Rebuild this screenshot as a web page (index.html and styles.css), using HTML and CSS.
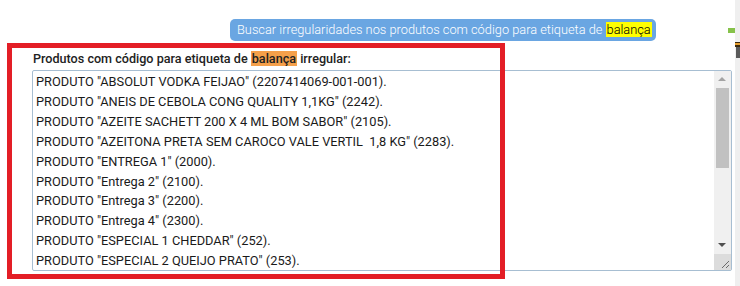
FILE: index.html
```html
<!DOCTYPE html>
<html lang="pt-BR">
<head>
    <meta charset="UTF-8">
    <title>Etiquetas de balança</title>
    <link rel="stylesheet" href="styles.css">
</head>
<body>

    <div class="page">
        <div class="main">
            <div class="toolbar">
                <span class="search-pill">Buscar irregularidades nos produtos com código para etiqueta de <mark class="hl-yellow">balança</mark></span>
            </div>

            <div class="result">
                <div class="result-label">Produtos com código para etiqueta de <mark class="hl-orange">balança</mark> irregular:</div>
                <div class="result-box">
                    <div class="result-lines">
                        <div>PRODUTO "ABSOLUT VODKA FEIJAO" (2207414069-001-001).</div>
                        <div>PRODUTO "ANEIS DE CEBOLA CONG QUALITY 1,1KG" (2242).</div>
                        <div>PRODUTO "AZEITE SACHETT 200 X 4 ML BOM SABOR" (2105).</div>
                        <div>PRODUTO "AZEITONA PRETA SEM CAROCO VALE VERTIL &nbsp;1,8 KG" (2283).</div>
                        <div>PRODUTO "ENTREGA 1" (2000).</div>
                        <div>PRODUTO "Entrega 2" (2100).</div>
                        <div>PRODUTO "Entrega 3" (2200).</div>
                        <div>PRODUTO "Entrega 4" (2300).</div>
                        <div>PRODUTO "ESPECIAL 1 CHEDDAR" (252).</div>
                        <div>PRODUTO "ESPECIAL 2 QUEIJO PRATO" (253).</div>
                    </div>
                    <div class="scrollbar">
                        <div class="arrow arrow-up"></div>
                        <div class="track">
                            <div class="thumb"></div>
                        </div>
                        <div class="arrow arrow-down"></div>
                        <div class="grip">
                            <svg width="17" height="16" viewBox="0 0 17 16">
                                <path d="M8 14 L15 7 M12 14 L15 11" stroke="#6b6b6b" stroke-width="1" fill="none"/>
                            </svg>
                        </div>
                    </div>
                </div>
            </div>

            <div class="callout"></div>
        </div>

        <div class="side">
            <div class="side-green"></div>
            <div class="side-stripes"></div>
            <div class="side-block"></div>
        </div>
    </div>

</body>
</html>
```

FILE: styles.css
```css
/* General */
body {
    margin: 0;
    padding: 0;
    background: #fff;
    font-family: Roboto, "Liberation Sans", sans-serif;
    color: #222;
}

mark {
    color: #000;
    padding: 0 1px;
}

.hl-yellow {
    background-color: #ffff00;
}

.hl-orange {
    background-color: #f5a04a;
    color: #222;
}

.page {
    display: flex;
    width: 740px;
    height: 286px;
    overflow: hidden;
}

.main {
    position: relative;
    width: 735px;
}

/* Top search button */
.toolbar {
    padding: 19px 0 0 230px;
    height: 22px;
}

.search-pill {
    display: inline-block;
    height: 22px;
    line-height: 22px;
    padding: 0 4px 0 7px;
    background-color: #6aa6e2;
    border-radius: 5px;
    color: #fff;
    font-size: 12.8px;
    font-weight: 300;
}

/* Result section */
.result {
    margin: 10px 0 0 32px;
}

.result-label {
    font-size: 12.6px;
    font-weight: 500;
    line-height: 15px;
    height: 19px;
    padding-left: 1px;
}

.result-box {
    display: flex;
    width: 698px;
    height: 199px;
    border: 1px solid #a7bed2;
    border-radius: 2px;
}

.result-lines {
    flex: 1;
    overflow: hidden;
    padding: 1px 0 0 3px;
    font-size: 12.8px;
    line-height: 19.9px;
    color: #1a1a1a;
}

/* Fake scrollbar */
.scrollbar {
    width: 17px;
    display: flex;
    flex-direction: column;
    background-color: #f0f0f0;
}

.arrow {
    height: 17px;
    position: relative;
}

.arrow::after {
    content: "";
    position: absolute;
    left: 4px;
    top: 6px;
    border-left: 4px solid transparent;
    border-right: 4px solid transparent;
}

.arrow-up::after {
    border-bottom: 4px solid #a3a3a3;
}

.arrow-down::after {
    border-top: 4px solid #505050;
}

.track {
    flex: 1;
    padding: 0 2px;
}

.thumb {
    height: 80px;
    background-color: #c1c1c1;
}

.grip {
    height: 16px;
    background-color: #dcdcdc;
}

.grip svg {
    display: block;
}

/* Red annotation frame */
.callout {
    position: absolute;
    left: 7px;
    top: 43px;
    width: 488px;
    height: 226px;
    border: 5px solid #e31e26;
    pointer-events: none;
}

/* Clipped side panel */
.side {
    width: 5px;
    background-color: #efefef;
    position: relative;
}

.side-green {
    position: absolute;
    left: -7px;
    top: 28px;
    width: 7px;
    height: 5px;
    background-color: #86c24a;
}

.side-stripes {
    position: absolute;
    left: 0;
    top: 42px;
    width: 5px;
    height: 5px;
    background: linear-gradient(#3a2a10 0 1px, #e8a030 1px 3px, #3a2a10 3px 5px);
}

.side-block {
    position: absolute;
    left: 1px;
    top: 47px;
    width: 4px;
    height: 11px;
    background-color: #5a5a5a;
}
```
